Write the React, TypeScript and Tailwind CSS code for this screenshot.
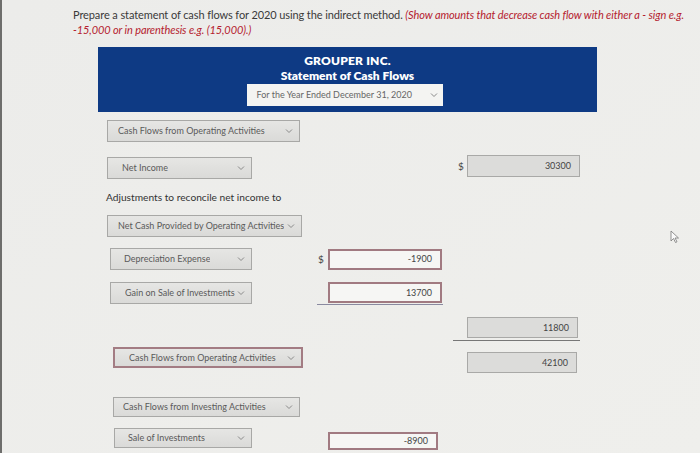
import React from "react";

const Chev = () => (
  <svg width="8" height="6" viewBox="0 0 8 6" className="shrink-0">
    <path d="M1 1.5 L4 4.5 L7 1.5" fill="none" stroke="#8a8a8a" strokeWidth="1" />
  </svg>
);

function Sel({ label, w, red, h = 22, pl = 10 }: { label: string; w: number; red?: boolean; h?: number; pl?: number }) {
  return (
    <div
      style={{ width: w, height: h, paddingLeft: pl }}
      className={
        "flex items-center justify-between pr-[6px] text-[9px] text-[#5a5a5a] bg-gradient-to-b from-[#e6e6e4] to-[#dadad8] " +
        (red ? "border-2 border-[#a37c83]" : "border border-[#a8a8a6]")
      }
    >
      <span className="truncate">{label}</span>
      <Chev />
    </div>
  );
}

function RedInput({ v, w = 114, h = 21 }: { v: string; w?: number; h?: number }) {
  return (
    <div
      style={{ width: w, height: h }}
      className="flex items-center justify-end pr-[8px] border-2 border-[#a17a81] bg-[#f6f6f4] text-[9px] text-[#444]"
    >
      {v}
    </div>
  );
}

function GrayInput({ v, w = 113, h = 22 }: { v: string; w?: number; h?: number }) {
  return (
    <div
      style={{ width: w, height: h }}
      className="flex items-center justify-end pr-[8px] border border-[#a9a9a7] bg-[#dcdcda] text-[9px] text-[#444]"
    >
      {v}
    </div>
  );
}

export default function App() {
  return (
    <div
      className="relative w-[700px] h-[453px] overflow-hidden bg-gradient-to-br from-[#ececea] to-[#efefec] border-l-2 border-[#6e6e6c]"
      style={{ fontFamily: "Lato, 'Open Sans', sans-serif" }}
    >
      {/* instructions */}
      <div className="pl-[71px] pt-[7px] text-[11px] leading-[15px] text-[#3a3a3a] tracking-[-0.1px]">
        <div className="whitespace-nowrap">
          Prepare a statement of cash flows for 2020 using the indirect method.{" "}
          <span className="italic text-[#b5222f]">(Show amounts that decrease cash flow with either a - sign e.g.</span>
        </div>
        <div className="italic text-[#b5222f]">-15,000 or in parenthesis e.g. (15,000).)</div>
      </div>

      {/* header */}
      <div className="ml-[96px] mt-[10px] w-[499px] h-[65px] bg-[#0e3a84] flex flex-col items-center pt-[6px]">
        <div className="text-white font-extrabold text-[12px] leading-[15px] tracking-[0.2px]">GROUPER INC.</div>
        <div className="text-white font-extrabold text-[12px] leading-[15px]">Statement of Cash Flows</div>
        <div className="mt-[1px] ml-[-6px] w-[196px] h-[22px] bg-[#f4f4f2] flex items-center justify-between pl-[10px] pr-[5px] text-[9px] text-[#666]">
          <span>For the Year Ended December 31, 2020</span>
          <Chev />
        </div>
      </div>

      {/* body rows */}
      <div className="flex flex-col">
        <div className="mt-[8px] ml-[105px]">
          <Sel label="Cash Flows from Operating Activities" w={193} />
        </div>

        <div className="mt-[13px] flex items-start">
          <div className="w-[456px] pl-[105px] pt-[2px]">
            <Sel label="Net Income" w={145} pl={14} />
          </div>
          <div className="w-[9px] text-[10px] text-[#444] pt-[4px]">$</div>
          <GrayInput v="30300" />
        </div>

        <div className="mt-[11px] ml-[104px] text-[10.2px] text-[#333] leading-[14px]">
          Adjustments to reconcile net income to
        </div>

        <div className="mt-[11px] ml-[105px]">
          <Sel label="Net Cash Provided by Operating Activities" w={195} />
        </div>

        <div className="mt-[11px] flex items-center">
          <div className="w-[316px] pl-[108px]">
            <Sel label="Depreciation Expense" w={142} pl={13} />
          </div>
          <div className="w-[10px] text-[10px] text-[#444]">$</div>
          <RedInput v="-1900" />
        </div>

        <div className="mt-[12px] flex items-start">
          <div className="w-[315px] pl-[108px]">
            <Sel label="Gain on Sale of Investments" w={142} pl={14} />
          </div>
          <div className="w-[126px] border-b border-[#8a8aa0] pb-[1px] pl-[11px]">
            <RedInput v="13700" />
          </div>
        </div>

        <div className="mt-[12px] ml-[451px] w-[127px] border-b border-[#777] pb-[2px] pl-[14px]">
          <GrayInput v="11800" w={111} h={21} />
        </div>

        <div className="mt-[6px] flex items-start">
          <div className="w-[465px] pl-[111px]">
            <Sel label="Cash Flows from Operating Activities" w={190} h={21} red pl={14} />
          </div>
          <div className="pt-[5px]">
            <GrayInput v="42100" w={110} h={21} />
          </div>
        </div>

        <div className="mt-[24px] ml-[111px]">
          <Sel label="Cash Flows from Investing Activities" w={187} h={20} pl={9} />
        </div>

        <div className="mt-[11px] flex items-start">
          <div className="w-[326px] pl-[112px]">
            <Sel label="Sale of Investments" w={138} h={20} pl={13} />
          </div>
          <div className="pt-[4px]">
            <RedInput v="-8900" w={110} h={18} />
          </div>
        </div>
      </div>

      {/* mouse cursor */}
      <svg className="absolute left-[668px] top-[230px]" width="10" height="14" viewBox="0 0 10 14">
        <path d="M1 1 L1 11 L3.5 8.5 L5.5 12.5 L7 11.8 L5 8 L8.5 8 Z" fill="#fafafa" stroke="#777" strokeWidth="0.8" />
      </svg>
    </div>
  );
}
